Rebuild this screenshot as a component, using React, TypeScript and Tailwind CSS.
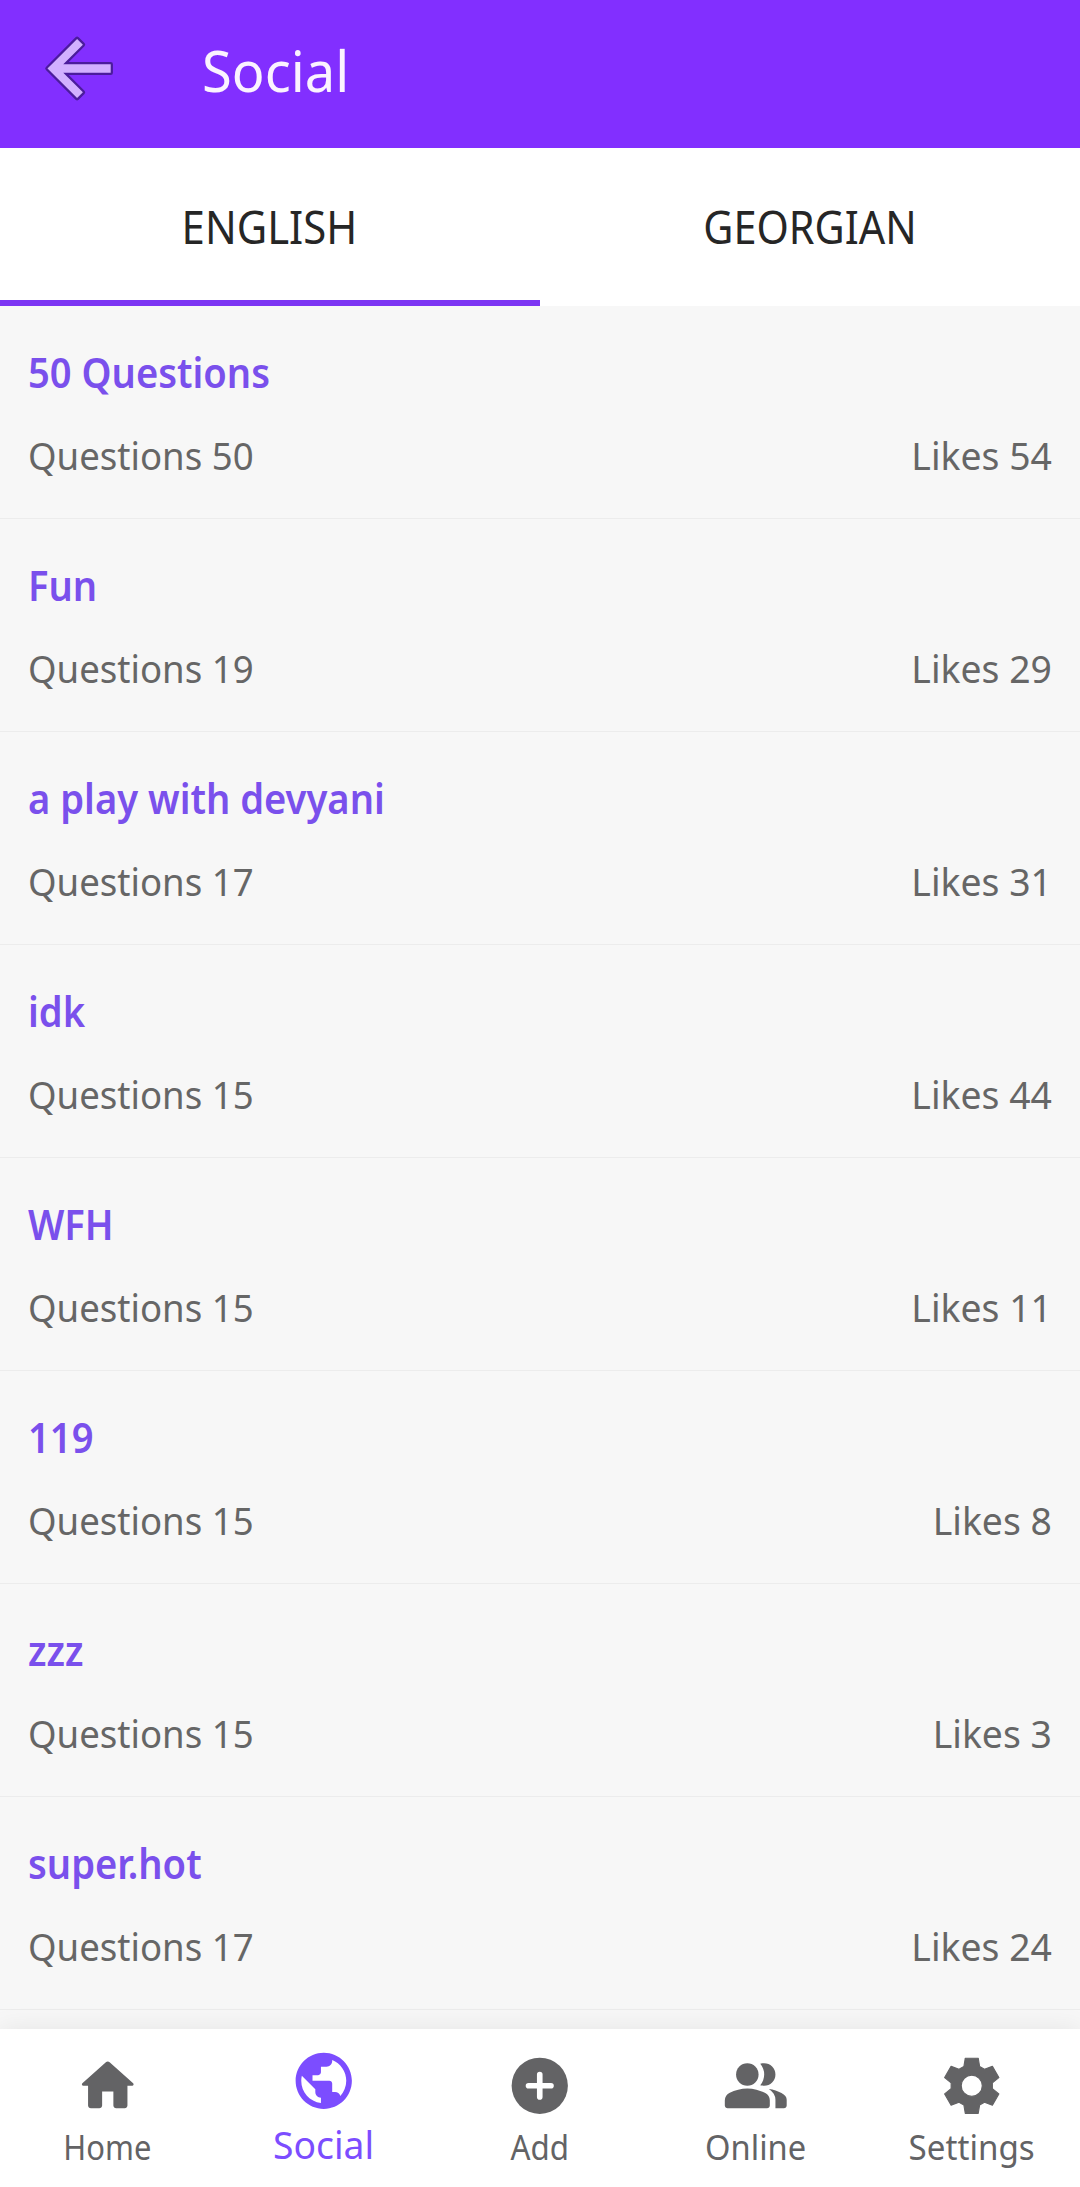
import React from "react";

const rows = [
  { title: "50 Questions", questions: 50, likes: 54 },
  { title: "Fun", questions: 19, likes: 29 },
  { title: "a play with devyani", questions: 17, likes: 31 },
  { title: "idk", questions: 15, likes: 44 },
  { title: "WFH", questions: 15, likes: 11 },
  { title: "119", questions: 15, likes: 8 },
  { title: "zzz", questions: 15, likes: 3 },
  { title: "super.hot", questions: 17, likes: 24 },
];

const HomeIcon = () => (
  <path d="M10 19v-5h4v5c0 .55.45 1 1 1h3c.55 0 1-.45 1-1v-7h1.700c.46 0 .68-.57.33-.87L12.670 3.600c-.38-.34-.96-.34-1.340 0l-8.360 7.530c-.34.3-.13.87.33.87H5v7c0 .55.45 1 1 1h3c.55 0 1-.45 1-1z" />
);

const GlobeIcon = () => (
  <path d="M12 2C6.48 2 2 6.48 2 12s4.48 10 10 10 10-4.48 10-10S17.52 2 12 2zm-1 17.93c-3.95-.49-7-3.85-7-7.93 0-.62.08-1.21.21-1.79L9 15v1c0 1.1.9 2 2 2v1.93zm6.9-2.54c-.26-.81-1-1.39-1.9-1.39h-1v-3c0-.55-.45-1-1-1H8v-2h2c.55 0 1-.45 1-1V7h2c1.1 0 2-.9 2-2v-.41c2.93 1.19 5 4.06 5 7.41 0 2.08-.8 3.97-2.1 5.39z" />
);

const AddIcon = () => (
  <>
    <circle cx="12" cy="12" r="10" />
    <path d="M12 8v8M8 12h8" stroke="white" strokeWidth="2" strokeLinecap="round" />
  </>
);

const PeopleIcon = () => (
  <>
    <circle cx="9" cy="8" r="4" />
    <path d="M1 17.2q0-.85.438-1.562T2.6 14.55q1.55-.775 3.15-1.162T9 13t3.25.388 3.15 1.162q.725.375 1.163 1.088T17 17.2V19q0 .413-.288.706T16 20H2q-.412 0-.706-.294T1 19z" />
    <path d="M19 8q0 1.65-1.175 2.825T15 12q-.275 0-.7-.063T13.6 11.8q.675-.8 1.037-1.775T15 8t-.363-2.025T13.6 4.2q.35-.125.7-.163T15 4q1.65 0 2.825 1.175T19 8z" />
    <path d="M19 20V17q0-1.1-.612-2.113T16.65 13.15q1.275.15 2.4.512t2.1.888q.9.5 1.375 1.112T23 17v2q0 .413-.288.706T22 20z" />
  </>
);

// One tooth of the gear, repeated every 60 degrees.
const tooth = [
  [-2.8, -6.85],
  [-2.3, -9.8],
  [2.3, -9.8],
  [2.8, -6.85],
];
const gearOutline = [0, 60, 120, 180, 240, 300]
  .flatMap((deg) => {
    const a = (deg * Math.PI) / 180;
    return tooth.map(
      ([x, y]) =>
        `${(12 + x * Math.cos(a) - y * Math.sin(a)).toFixed(2)} ${(12 + x * Math.sin(a) + y * Math.cos(a)).toFixed(2)}`,
    );
  })
  .join("L");

const GearIcon = () => (
  <path
    fillRule="evenodd"
    stroke="currentColor"
    strokeWidth="0.4"
    strokeLinejoin="round"
    d={`M${gearOutline}ZM12 8.25a3.75 3.75 0 1 0 0 7.5 3.75 3.75 0 0 0 0-7.5z`}
  />
);

const tabs = [
  { label: "Home", Icon: HomeIcon, fit: "scale-x-[0.91]" },
  { label: "Social", Icon: GlobeIcon, fit: "scale-x-[0.98]", active: true },
  { label: "Add", Icon: AddIcon, fit: "scale-x-[0.92]" },
  { label: "Online", Icon: PeopleIcon, fit: "scale-x-[0.96]" },
  { label: "Settings", Icon: GearIcon, fit: "scale-x-[0.975]" },
];

export default function App() {
  return (
    <div className="flex h-[2187px] w-[1080px] flex-col overflow-hidden bg-[#f7f7f7] font-['Noto_Sans',sans-serif]">
      <header className="flex h-[148px] items-center bg-[#822fff] pl-[44px]">
        <svg className="mb-[11px] h-[67px] w-[71px]" viewBox="0 0 71 67">
          <path
            d="M3.5 33.5L33.1 3.9L38.9 9.7L19.25 29.35H66.7V37.65H19.25L38.9 57.3L33.1 63.1Z"
            fill="#d2b0ff"
            stroke="#4b1c9c"
            strokeWidth="4.5"
            strokeLinejoin="round"
            paintOrder="stroke"
          />
        </svg>
        <h1 className="mb-[9px] ml-[87px] origin-left scale-x-[0.97] text-[56px] leading-none text-[#fbf3ff]">Social</h1>
      </header>

      <div className="grid h-[158px] grid-cols-2 bg-white text-[45px] text-[#262626]">
        <div className="flex items-center justify-center border-b-[6px] border-[#7c35f3] pt-[5px]">
          <span className="-ml-px scale-x-[0.93]">ENGLISH</span>
        </div>
        <div className="flex items-center justify-center border-b-[6px] border-transparent pt-[5px]">
          <span className="-ml-px scale-x-[0.92]">GEORGIAN</span>
        </div>
      </div>

      <main className="flex-1 overflow-hidden">
        {rows.map((r) => (
          <article key={r.title} className="flex h-[213px] flex-col border-b border-[#ececec] px-7 pt-[38px]">
            <h2 className="origin-left scale-x-[0.908] self-start text-[42px] leading-[56px] font-semibold text-[#7a50ec]">
              {r.title}
            </h2>
            <div className="mt-[27px] flex justify-between text-[38.5px] leading-[56px] text-[#666]">
              <span className="origin-left scale-x-[0.95]">Questions {r.questions}</span>
              <span className="origin-right scale-x-[0.97]">Likes {r.likes}</span>
            </div>
          </article>
        ))}
      </main>

      <nav className="z-10 grid h-[158px] grid-cols-5 bg-white text-[#636365] shadow-[0_0_24px_rgba(0,0,0,0.08)]">
        {tabs.map(({ label, Icon, active, fit }) => (
          <div
            key={label}
            className={active ? "flex flex-col items-center pt-[18px] text-[#7c4dff]" : "flex flex-col items-center pt-[23px]"}
          >
            <svg className="h-[67.5px] w-[67.5px] shrink-0" viewBox="0 0 24 24" fill="currentColor">
              <Icon />
            </svg>
            <div className={active ? "mt-[4px] text-[38px] leading-[50px]" : "mt-[4px] text-[34px] leading-[46px]"}>
              <span className={`-ml-px inline-block ${fit}`}>{label}</span>
            </div>
          </div>
        ))}
      </nav>
    </div>
  );
}
